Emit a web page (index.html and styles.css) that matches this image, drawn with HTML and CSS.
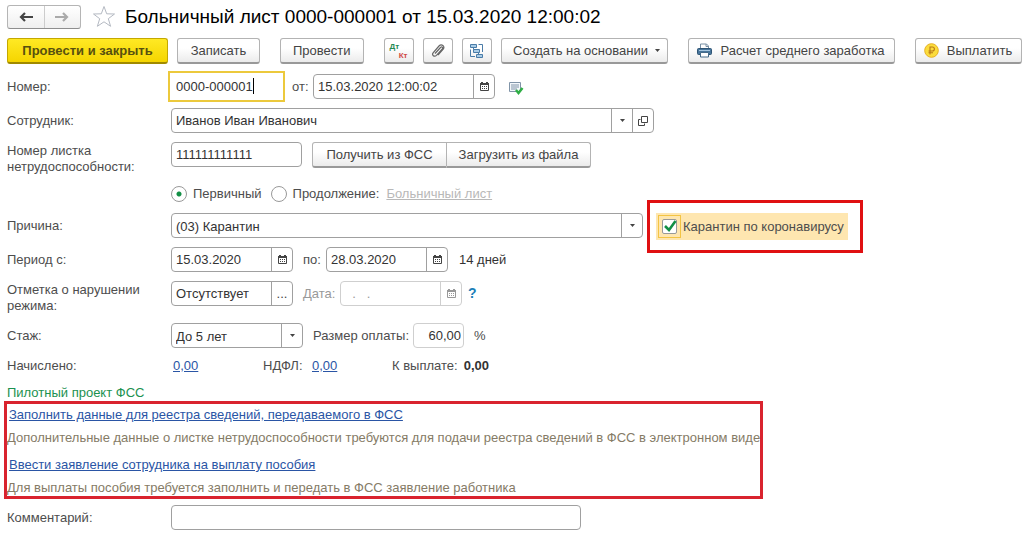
FILE: index.html
```
<!DOCTYPE html>
<html lang="ru">
<head>
  <meta charset="utf-8">
  <title>Больничный лист</title>
  <link rel="stylesheet" href="styles.css">
</head>
<body>
  <svg class="sprite" aria-hidden="true">
    <symbol id="calendar" viewBox="0 0 11 11">
      <path d="M1.500 2.500h8v7h-8z" fill="none" stroke="currentColor"/>
      <path d="M1 2h9v2h-9zM2 1h2v1h-2zM7 1h2v1h-2z" fill="currentColor"/>
      <path d="M3 5.500h5M3 7.500h5" stroke="currentColor" stroke-dasharray="1 1"/>
    </symbol>
    <symbol id="arrow" viewBox="0 0 7 4">
      <path d="M1 0h5L3.500 3z" fill="currentColor"/>
    </symbol>
  </svg>

  <header class="titlebar">
    <div class="nav">
      <button type="button" aria-label="Назад">
        <svg width="14" height="10" viewBox="0 0 14 10"><path d="M14 5H3M6 1L2 5l4 4" fill="none" stroke="#444" stroke-width="2.200"/></svg>
      </button>
      <button type="button" aria-label="Вперед">
        <svg width="14" height="10" viewBox="0 0 14 10"><path d="M0 5h11M8 1l4 4-4 4" fill="none" stroke="#aaa" stroke-width="2.200"/></svg>
      </button>
    </div>
    <svg class="star" width="24" height="23" viewBox="0 0 24 23"><path d="M12 1.500l2.700 7.300 7.800.2-6.200 4.700 2.300 7.600-6.600-4.500-6.600 4.500 2.300-7.600L1.500 9l7.800-.2z" fill="#fff" stroke="#b4b9c2"/></svg>
    <h1>Больничный лист 0000-000001 от 15.03.2020 12:00:02</h1>
  </header>

  <div class="toolbar">
    <button type="button" class="btn primary">Провести и закрыть</button>
    <button type="button" class="btn">Записать</button>
    <button type="button" class="btn spaced">Провести</button>
    <button type="button" class="btn icon spaced" aria-label="Проводки">
      <span class="dtkt"><b class="dt">Дт</b><b class="kt">Кт</b></span>
    </button>
    <button type="button" class="btn icon" aria-label="Файлы">
      <svg width="14" height="15" viewBox="0 0 14 15"><path d="M4 10.500l5.500-6c1.500-1.500 3 0 1.800 1.300l-5.800 6.500c-2.200 2.200-5.200-.2-3.200-2.700L8 3c2.500-2.800 6.500.2 4.200 3.200L7 12" fill="none" stroke="#666" stroke-width="1.200"/></svg>
    </button>
    <button type="button" class="btn icon" aria-label="Структура подчиненности">
      <svg width="15" height="15" viewBox="0 0 15 15"><g fill="#a9cce6" stroke="#4a7ca8"><path d="M1.500 1.500h6v3h-6zM4.500 6.500h6v3h-6zM7.500 11.500h6v3h-6z"/><path d="M9.500 1.500h4V9M1.500 6.500v7H6M4.500 4.500v2M9.500 9.500v2" fill="none"/></g></svg>
    </button>
    <button type="button" class="btn create">Создать на основании
      <svg width="7" height="4"><use href="#arrow"/></svg>
    </button>
    <button type="button" class="btn salary spaced">
      <svg width="15" height="15" viewBox="0 0 15 15"><path d="M3.500 6V1h6l2 2v3" fill="#fff" stroke="#7890a5"/><path d="M9 1v2.500h2.500" fill="none" stroke="#7890a5"/><rect x="0.500" y="5.500" width="14" height="6" rx="1" fill="#47759b" stroke="#2f5575"/><path d="M2 7.500h11" stroke="#a6c6df"/><path d="M3.500 9.500h8v4.500h-8z" fill="#fff" stroke="#456a89"/></svg>
      Расчет среднего заработка
    </button>
    <button type="button" class="btn pay spaced">
      <svg width="15" height="15" viewBox="0 0 15 15"><circle cx="7.500" cy="7.500" r="6.800" fill="#fbdc3c" stroke="#e6b022"/><path d="M6 11.500V4h2.300c2.800 0 2.800 4 0 4H4.500M4.500 9.800H9" fill="none" stroke="#b97818" stroke-width="1.100"/></svg>
      Выплатить
    </button>
  </div>

  <form class="form">
    <div class="row">
      <label class="name" for="number">Номер:</label>
      <span class="number">
        <input class="box" type="text" id="number" value="0000-000001">
        <i class="caret"></i>
      </span>
      <label class="number-date" for="date">от:</label>
      <span class="field datetime">
        <input type="text" id="date" value="15.03.2020 12:00:02">
        <button type="button" aria-label="Календарь"><svg width="11" height="11"><use href="#calendar"/></svg></button>
      </span>
      <svg class="posted" width="16" height="14" viewBox="0 0 16 14"><path d="M1.500 1.500h11v9h-11z" fill="#f4f8fb" stroke="#8094a8"/><path d="M3 4h8M3 6h8M3 8h6" stroke="#8094a8"/><path d="M8 9l2.500 3L14.500 7" fill="none" stroke="#2fae45" stroke-width="2.500"/></svg>
    </div>

    <div class="row">
      <label class="name" for="employee">Сотрудник:</label>
      <span class="field employee">
        <input type="text" id="employee" value="Иванов Иван Иванович">
        <button type="button" aria-label="Выбрать"><svg width="7" height="4"><use href="#arrow"/></svg></button>
        <button type="button" aria-label="Открыть"><svg width="10" height="10" viewBox="0 0 10 10"><path d="M3.500.5h6v6h-6zM2.500 3.500h-2v6h6v-2" fill="none" stroke="#444"/></svg></button>
      </span>
    </div>

    <div class="row">
      <label class="name two-line" for="sheet">Номер листка нетрудоспособности:</label>
      <input class="box sheet" type="text" id="sheet" value="111111111111">
      <span class="group">
        <button type="button" class="btn">Получить из ФСС</button>
        <button type="button" class="btn">Загрузить из файла</button>
      </span>
    </div>

    <div class="row radios">
      <label><input type="radio" name="kind" checked>Первичный</label>
      <label><input type="radio" name="kind">Продолжение:</label>
      <a class="disabled" href="#">Больничный лист</a>
    </div>

    <div class="row">
      <label class="name" for="reason">Причина:</label>
      <span class="field select reason">
        <select id="reason"><option>(03) Карантин</option></select>
        <span class="drop"><svg width="7" height="4"><use href="#arrow"/></svg></span>
      </span>
      <span class="mark">
        <label class="quarantine"><span class="tick"><input type="checkbox" checked><svg width="14" height="14" viewBox="0 0 14 14"><path d="M2 6l4 4 6.500-9" fill="none" stroke="#128f45" stroke-width="2.600"/></svg></span>Карантин по коронавирусу</label>
      </span>
    </div>

    <div class="row">
      <label class="name" for="from">Период с:</label>
      <span class="field day">
        <input type="text" id="from" value="15.03.2020">
        <button type="button" aria-label="Календарь"><svg width="11" height="11"><use href="#calendar"/></svg></button>
      </span>
      <label class="to" for="to">по:</label>
      <span class="field day">
        <input type="text" id="to" value="28.03.2020">
        <button type="button" aria-label="Календарь"><svg width="11" height="11"><use href="#calendar"/></svg></button>
      </span>
      <span class="days">14 дней</span>
    </div>

    <div class="row">
      <label class="name two-line" for="violation">Отметка о нарушении режима:</label>
      <span class="field day">
        <input type="text" id="violation" value="Отсутствует">
        <button type="button" aria-label="Выбрать">...</button>
      </span>
      <label class="violation-date" for="vdate">Дата:</label>
      <span class="field off day">
        <input type="text" id="vdate" value="  .   ." disabled>
        <button type="button" aria-label="Календарь" disabled><svg width="11" height="11"><use href="#calendar"/></svg></button>
      </span>
      <a class="help" href="#">?</a>
    </div>

    <div class="row">
      <label class="name" for="seniority">Стаж:</label>
      <span class="field select seniority">
        <select id="seniority"><option>До 5 лет</option></select>
        <span class="drop"><svg width="7" height="4"><use href="#arrow"/></svg></span>
      </span>
      <label class="rate-label" for="rate">Размер оплаты:</label>
      <input class="box rate" type="text" id="rate" value="60,00">
      <span class="percent">%</span>
    </div>

    <div class="row totals">
      <span class="name">Начислено:</span>
      <a class="accrued" href="#">0,00</a>
      <span class="tax">НДФЛ:</span>
      <a class="tax-sum" href="#">0,00</a>
      <span>К выплате:</span>
      <b>0,00</b>
    </div>

    <h2>Пилотный проект ФСС</h2>
    <div class="pilot">
      <a href="#">Заполнить данные для реестра сведений, передаваемого в ФСС</a>
      <p>Дополнительные данные о листке нетрудоспособности требуются для подачи реестра сведений в ФСС в электронном виде</p>
      <a href="#">Ввести заявление сотрудника на выплату пособия</a>
      <p>Для выплаты пособия требуется заполнить и передать в ФСС заявление работника</p>
    </div>

    <div class="row">
      <label class="name" for="comment">Комментарий:</label>
      <input class="box comment" type="text" id="comment">
    </div>
  </form>
</body>
</html>
```
FILE: styles.css
```
* {
  box-sizing: border-box;
}
body {
  margin: 0;
  padding: 4px 6px 0 7px;
  background: #fff;
  color: #4d4d4d;
  font: 13px/16px "Liberation Sans", Arial, sans-serif;
}
button, input, select {
  font: inherit;
  color: inherit;
  margin: 0;
}
button svg {
  display: block;
}
a {
  color: #2a55a5;
}
.sprite {
  display: none;
}

/* title */
.titlebar {
  display: flex;
  align-items: center;
  height: 25px;
}
.nav {
  display: flex;
  width: 74px;
  height: 24px;
  border: 1px solid #b5b5b5;
  border-bottom-color: #8e8e8e;
  border-radius: 3px;
  background: linear-gradient(#fff, #efefef);
}
.nav button {
  flex: 1;
  display: flex;
  align-items: center;
  justify-content: center;
  padding: 0;
  border: 0;
  background: none;
}
.nav button + button {
  border-left: 1px solid #ccc;
}
.star {
  margin: 0 9px 0 11px;
}
h1 {
  margin: 0;
  color: #000;
  font-size: 19px;
  font-weight: normal;
  line-height: 24px;
}

/* command bar */
.toolbar {
  display: flex;
  gap: 9px;
  margin: 9px 0 10px;
}
.btn {
  display: flex;
  align-items: center;
  justify-content: center;
  height: 26px;
  padding: 0 12px;
  border: 1px solid #b3b3b3;
  border-bottom: 2px solid #999;
  border-radius: 3px;
  background: linear-gradient(#fff 40%, #ebebeb);
  color: #444;
  white-space: nowrap;
}
.toolbar .btn {
  min-width: 83px;
}
.toolbar .primary {
  min-width: 161px;
  border-color: #c4a800;
  border-bottom-color: #a08a00;
  background: linear-gradient(#ffe924, #f5d500);
  color: #57500f;
  font-weight: bold;
}
.toolbar .icon {
  width: 30px;
  min-width: 30px;
  padding: 0;
}
.toolbar .spaced {
  margin-left: 11px;
}
.toolbar .create {
  min-width: 167px;
  gap: 6px;
  padding: 0 4px 0 10px;
}
.toolbar .salary {
  min-width: 207px;
  gap: 8px;
  padding: 0 7px;
}
.toolbar .pay {
  min-width: 107px;
  gap: 8px;
  padding: 0 6px;
}
.dtkt {
  display: flex;
  flex-direction: column;
  width: 18px;
  font-size: 8px;
  line-height: 9px;
}
.dt {
  align-self: flex-start;
  color: #1f8a55;
}
.kt {
  align-self: flex-end;
  color: #d04a45;
}

/* form rows */
.row {
  display: flex;
  align-items: flex-start;
  min-height: 25px;
  margin-bottom: 9px;
  line-height: 25px;
}
.name {
  flex: none;
  width: 164px;
}
.two-line {
  padding: 1px 20px 0 0;
  line-height: 16px;
}
.box, .field {
  flex: none;
  height: 25px;
  border: 1px solid #a0a0a0;
  border-radius: 4px;
  background: #fff;
  color: #333;
}
.box {
  padding: 0 4px;
}
.field {
  display: flex;
}
.field input {
  flex: 1;
  min-width: 0;
  padding: 0 4px;
  border: 0;
  background: none;
}
.field button, .drop {
  display: flex;
  align-items: center;
  justify-content: center;
  width: 21px;
  padding: 0;
  border: 0;
  border-left: 1px solid #a0a0a0;
  background: none;
  color: #444;
}
.select {
  display: grid;
  grid-template: 23px / 1fr 21px;
}
.select select {
  grid-area: 1 / 1 / 2 / 3;
  appearance: none;
  padding: 0 25px 0 4px;
  border: 0;
  background: none;
}
.drop {
  grid-area: 1 / 2;
  pointer-events: none;
}
.off {
  border-color: #cfcfcf;
}
.field.off button {
  border-color: #cfcfcf;
  color: #999;
}
.off input {
  color: #999;
  white-space: pre;
}
.number {
  position: relative;
  display: flex;
}
.number input {
  width: 111px;
  border-color: transparent;
  border-radius: 0;
  outline: 2px solid #ecc93c;
  outline-offset: 1px;
}
.caret {
  position: absolute;
  top: 4px;
  left: 82px;
  width: 1px;
  height: 16px;
  background: #000;
}
.number-date {
  width: 31px;
  padding-left: 10px;
}
.datetime {
  width: 182px;
}
.posted {
  margin: 7px 0 0 13px;
}
.employee {
  width: 483px;
}
.sheet {
  width: 131px;
}
.group {
  display: flex;
  margin-left: 10px;
}
.group .btn {
  min-width: 135px;
  border-radius: 3px 0 0 3px;
}
.group .btn + .btn {
  min-width: 144px;
  padding: 0 11px;
  border-left: 0;
  border-radius: 0 3px 3px 0;
}
.radios {
  min-height: 20px;
  padding-left: 164px;
  line-height: 19px;
}
.radios label {
  display: flex;
  align-items: center;
  gap: 6px;
  margin-right: 9px;
}
.radios label + label {
  margin-right: 7px;
}
.radios input {
  appearance: none;
  width: 16px;
  height: 16px;
  border: 1px solid #999;
  border-radius: 50%;
  background: #fff;
}
.radios input:checked {
  background: radial-gradient(#128f45 2px, #fff 3px);
}
.disabled {
  color: #b8b8b8;
}
.reason {
  width: 472px;
}
.mark {
  margin: -13px 0 -15px 4px;
  padding: 10px 12px 10px 6px;
  border: 3px solid #e01012;
}
.quarantine {
  display: flex;
  align-items: center;
  gap: 2px;
  height: 27px;
  padding: 0 4px 0 2px;
  background: #fee6b0;
}
.tick {
  display: grid;
  place-items: center;
  width: 23px;
  height: 23px;
  border: 1px solid #f3c444;
}
.tick input {
  grid-area: 1 / 1;
  appearance: none;
  width: 15px;
  height: 15px;
  border: 1px solid #999;
  border-radius: 2px;
  background: #fff;
}
.tick svg {
  grid-area: 1 / 1;
}
.day {
  width: 122px;
}
.to {
  width: 33px;
  padding-left: 10px;
}
.days {
  margin-left: 11px;
  color: #333;
}
.violation-date {
  width: 47px;
  padding-left: 10px;
  color: #999;
}
.help {
  margin-left: 6px;
  color: #1c7fb8;
  font-size: 14px;
  font-weight: bold;
  text-decoration: none;
}
.seniority {
  width: 132px;
}
.rate-label {
  width: 110px;
  padding-left: 10px;
}
.rate {
  width: 51px;
  padding: 0 2px;
  border-color: #cfcfcf;
  text-align: right;
}
.percent {
  margin-left: 10px;
}
.totals {
  min-height: 18px;
  line-height: 18px;
}
.accrued {
  width: 92px;
  padding-left: 2px;
}
.tax {
  width: 49px;
}
.tax-sum {
  width: 80px;
}
.totals b {
  margin-left: 6px;
  color: #333;
}

/* FSS block */
h2 {
  margin: 0;
  color: #1b9150;
  font-size: 13px;
  font-weight: normal;
  line-height: 17px;
}
.pilot {
  width: fit-content;
  margin: 0 0 6px -3px;
  padding-top: 3px;
  border: 3px solid #d9232e;
}
.pilot a {
  display: block;
  width: fit-content;
  margin-left: 2px;
}
.pilot p {
  margin: 7px 0 11px;
  color: #857b66;
}
.pilot p:last-child {
  margin-bottom: 0;
}
.comment {
  width: 410px;
}
```
